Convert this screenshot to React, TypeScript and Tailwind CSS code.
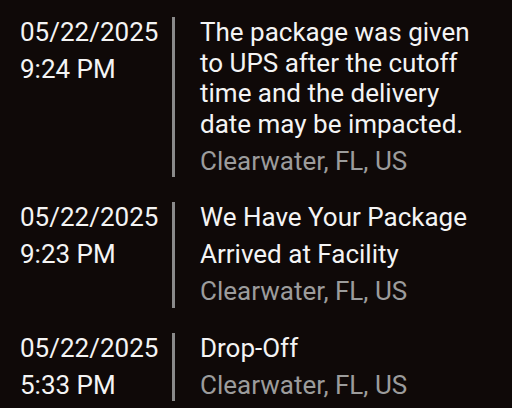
const events = [
  {
    date: '05/22/2025',
    time: '9:24 PM',
    lines: ['The package was given to UPS after the cutoff time and the delivery date may be impacted.'],
    location: 'Clearwater, FL, US',
  },
  {
    date: '05/22/2025',
    time: '9:23 PM',
    lines: ['We Have Your Package', 'Arrived at Facility'],
    location: 'Clearwater, FL, US',
  },
  {
    date: '05/22/2025',
    time: '5:33 PM',
    lines: ['Drop-Off'],
    location: 'Clearwater, FL, US',
  },
];

export default function App() {
  return (
    <div
      className="w-[512px] h-[408px] overflow-hidden bg-[#0f0908] text-[26px] leading-[30.5px] text-[#f4f4f4] pt-[17px] pl-[20px] pr-[22px] flex flex-col gap-[25px]"
      style={{ fontFamily: 'Roboto, "Noto Sans", sans-serif' }}
    >
      {events.map((e, i) => (
        <div key={i} className="flex">
          <div className="w-[152px] shrink-0 flex flex-col gap-[6.5px]">
            <div>{e.date}</div>
            <div>{e.time}</div>
          </div>
          <div className="w-[3px] shrink-0 bg-[#8a8a8a]" />
          <div className="flex-1 pl-[25px] pb-[1px] flex flex-col gap-[6.5px]">
            {e.lines.map((l, j) => (
              <div key={j}>{l}</div>
            ))}
            <div className="text-[#9c9c9c]">{e.location}</div>
          </div>
        </div>
      ))}
    </div>
  );
}
